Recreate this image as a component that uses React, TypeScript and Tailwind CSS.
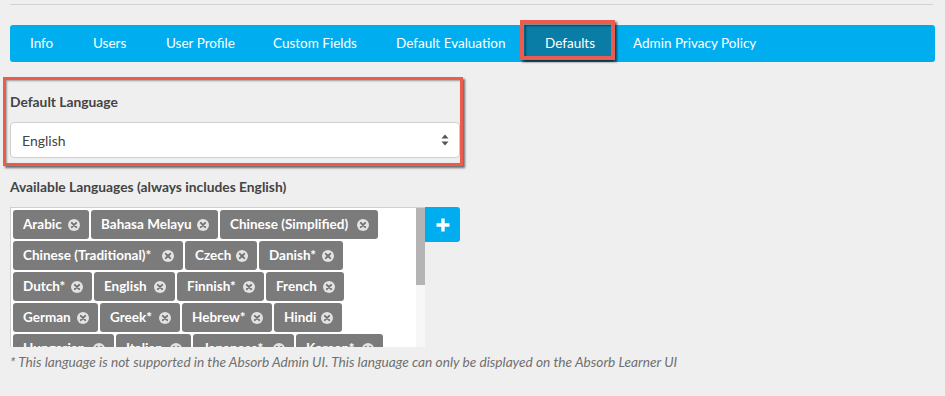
import React from 'react';

const tabs = [
  { label: 'Info', w: 'w-[63px]' },
  { label: 'Users', w: 'w-[73px]' },
  { label: 'User Profile', w: 'w-[107px]' },
  { label: 'Custom Fields', w: 'w-[123px]' },
  { label: 'Default Evaluation', w: 'w-[149px]' },
  { label: 'Defaults', w: 'w-[88px]', active: true },
  { label: 'Admin Privacy Policy', w: 'w-[160px]' },
];

// widths read off the design so rows wrap the same way
const languages = [
  { name: 'Arabic', w: 'w-[76px]' },
  { name: 'Bahasa Melayu', w: 'w-[127px]' },
  { name: 'Chinese (Simplified)', w: 'w-[158px]' },
  { name: 'Chinese (Traditional)*', w: 'w-[170px]' },
  { name: 'Czech', w: 'w-[72px]' },
  { name: 'Danish*', w: 'w-[84px]' },
  { name: 'Dutch*', w: 'w-[79px]' },
  { name: 'English', w: 'w-[81px]' },
  { name: 'Finnish*', w: 'w-[87px]' },
  { name: 'French', w: 'w-[78px]' },
  { name: 'German', w: 'w-[85px]' },
  { name: 'Greek*', w: 'w-[80px]' },
  { name: 'Hebrew*', w: 'w-[90px]' },
  { name: 'Hindi', w: 'w-[68px]' },
  { name: 'Hungarian', w: 'w-[101px]' },
  { name: 'Italian', w: 'w-[75px]' },
  { name: 'Japanese*', w: 'w-[101px]' },
  { name: 'Korean*', w: 'w-[87px]' },
];

const RemoveIcon = () => (
  <svg width="12" height="12" viewBox="0 0 12 12" className="shrink-0">
    <circle cx="6" cy="6" r="6" fill="#e2e2e2" />
    <path d="M3.8 3.8 L8.2 8.2 M8.2 3.8 L3.8 8.2" stroke="#6f6f6f" strokeWidth="1.8" strokeLinecap="round" />
  </svg>
);

export default function App() {
  return (
    <div className="w-[945px] h-[396px] bg-[#efefef] px-[10px] pt-[4px] overflow-hidden font-['Lato',sans-serif] text-[#333]">
      <div className="border-t border-[#d2d2d2] mr-[2px]" />

      {/* Tabs */}
      <div className="relative mt-[20px] h-[37px] rounded-[3px] bg-[#00aeef] flex items-stretch text-white text-[13.5px]">
        {tabs.map((t) => (
          <div
            key={t.label}
            className={`${t.w} pl-[20px] flex items-center whitespace-nowrap ${t.active ? 'bg-[#0a7da6]' : ''}`}
          >
            {t.label}
          </div>
        ))}
        <div className="absolute left-[510px] top-[-5px] w-[95px] h-[40px] border-[4px] border-[#ea5d4e] shadow-[2px_2px_2px_rgba(0,0,0,0.6),inset_2px_2px_2px_rgba(0,0,0,0.45)]" />
      </div>

      {/* Default language */}
      <div className="relative mt-[15px] pt-[16px]">
        <div className="absolute left-[-7px] top-[0px] w-[460px] h-[89px] border-[3px] border-[#ea5d4e] shadow-[2px_2px_2px_rgba(0,0,0,0.55),inset_1px_1px_2px_rgba(0,0,0,0.35)] pointer-events-none" />
        <div className="text-[13.8px] font-bold text-[#444] leading-[18px]">Default Language</div>
        <div className="mt-[11px] w-[450px] h-[36px] bg-white border border-[#cfcfcf] rounded-[4px] flex items-center justify-between pl-[11px] pr-[10px] text-[14px] text-[#444]">
          <span>English</span>
          <svg width="8" height="14" viewBox="0 0 8 14">
            <path d="M4 1.5 L7.5 5.5 L0.5 5.5 Z" fill="#555" />
            <path d="M4 12.5 L7.5 8.5 L0.5 8.5 Z" fill="#555" />
          </svg>
        </div>
      </div>

      {/* Available languages */}
      <div className="mt-[20px] text-[13.8px] font-bold text-[#444] leading-[18px]">
        Available Languages (always includes English)
      </div>
      <div className="mt-[11px] flex items-start">
        <div className="w-[415px] h-[140px] bg-white border-t border-l border-[#cfcfcf] flex overflow-hidden">
          <div className="flex-1 flex flex-wrap content-start gap-x-[2px] gap-y-[2px] pl-[2px] pt-[2px]">
            {languages.map((l) => (
              <div
                key={l.name}
                className={`${l.w} h-[29px] bg-[#7b7b7b] rounded-[3px] pl-[10px] pr-[9px] flex items-center justify-between text-white text-[13.5px] font-bold whitespace-nowrap`}
              >
                {l.name}
                <RemoveIcon />
              </div>
            ))}
          </div>
          <div className="w-[9px] h-full bg-[#f7f7f7] flex flex-col">
            <div className="h-[77px] bg-[#b4b4b4]" />
          </div>
        </div>
        <button className="w-[35px] h-[35px] bg-[#00aeef] rounded-r-[3px] flex items-center justify-center">
          <svg width="16" height="16" viewBox="0 0 16 16">
            <path d="M8 1.5 V14.5 M1.5 8 H14.5" stroke="white" strokeWidth="3.4" />
          </svg>
        </button>
      </div>

      <div className="mt-[5px] text-[13.7px] italic text-[#6f6f6f]">
        * This language is not supported in the Absorb Admin UI. This language can only be displayed on the Absorb Learner UI
      </div>
    </div>
  );
}
